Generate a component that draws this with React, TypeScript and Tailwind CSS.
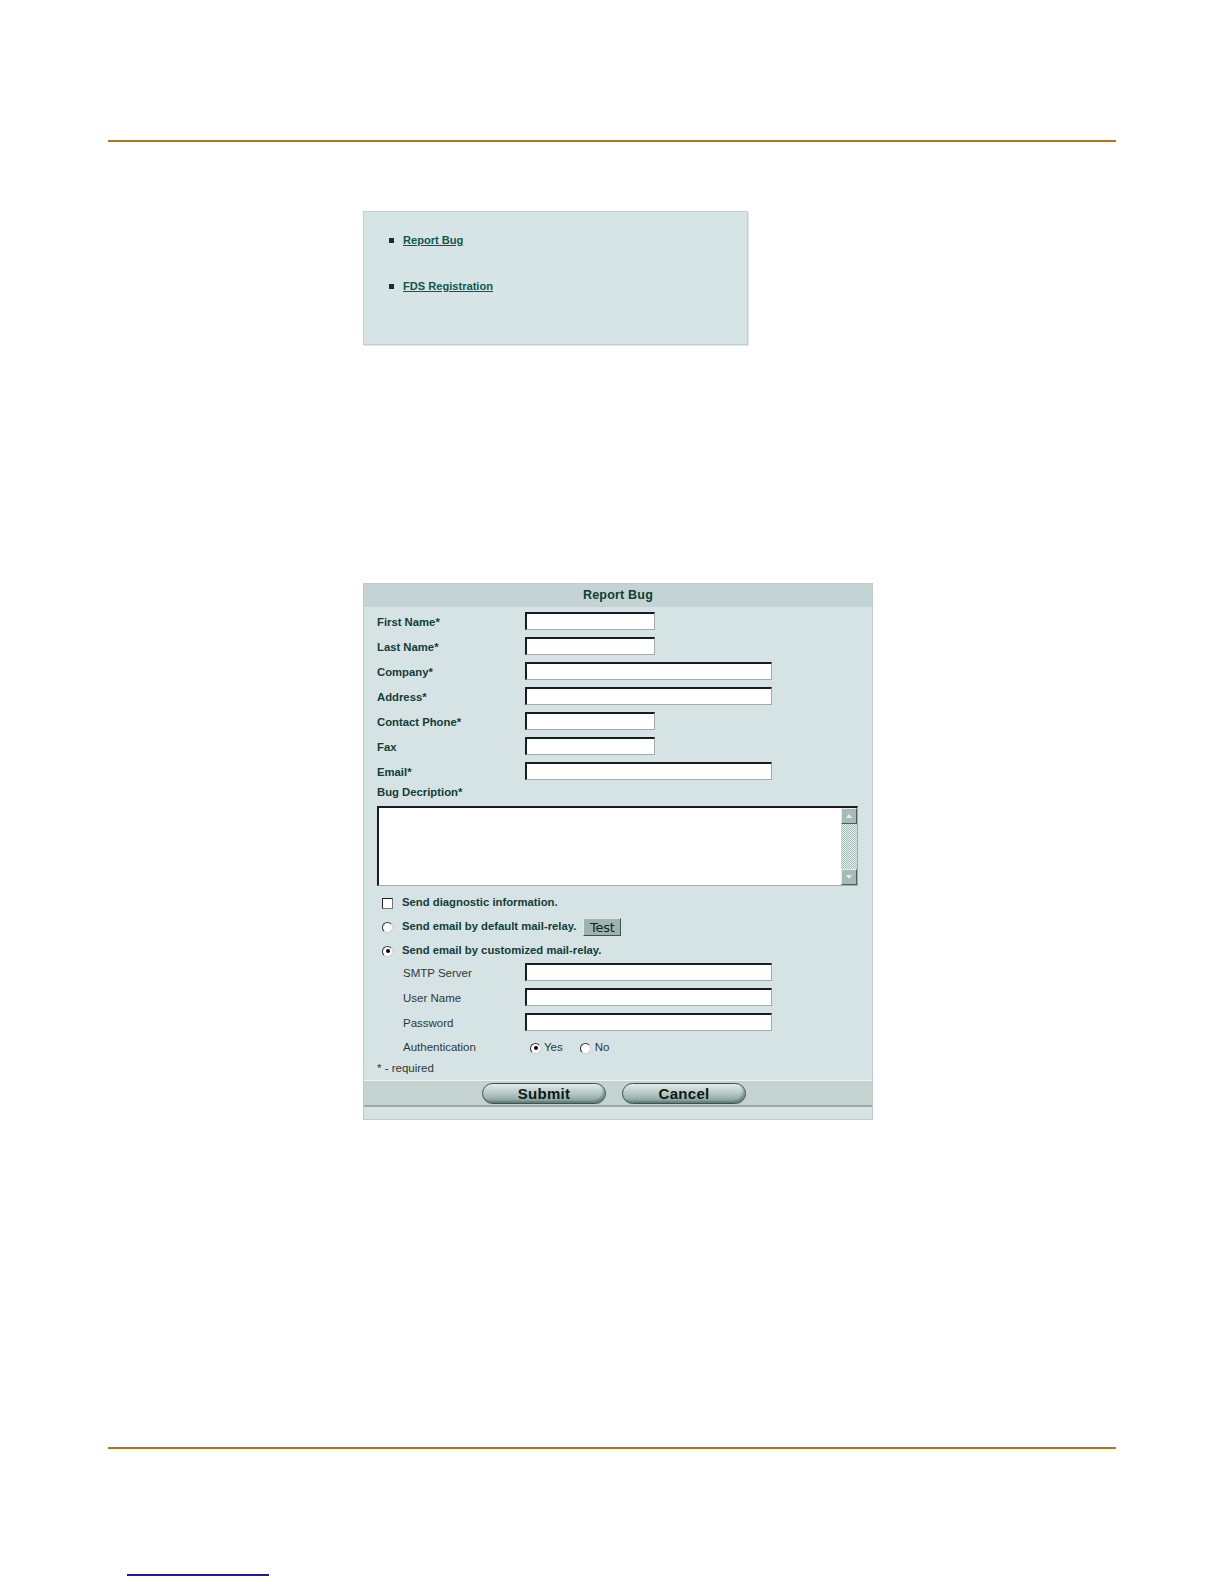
import React from 'react'

const boldLabel = "text-[11.3px] font-bold text-[#123d36] leading-none"
const plainLabel = "text-[11.5px] text-[#2c3937] leading-none"

function TextInput({ wide }: { wide?: boolean }) {
    return (
        <input
            type="text"
            className={wide
                ? "w-[247px] h-[18px] bg-white border-t-2 border-l-2 border-b border-r border-t-[#1c1c1c] border-l-[#1c1c1c] border-b-[#a2acaa] border-r-[#a2acaa] outline-none"
                : "w-[130px] h-[18px] bg-white border-t-2 border-l-2 border-b border-r border-t-[#1c1c1c] border-l-[#1c1c1c] border-b-[#a2acaa] border-r-[#a2acaa] outline-none"}
        />
    )
}

function Radio({ checked }: { checked?: boolean }) {
    return (
        <span className="w-[11px] h-[11px] shrink-0 rounded-full bg-white border border-t-[#333] border-l-[#333] border-b-[#c9d2d0] border-r-[#c9d2d0] flex items-center justify-center">
            {checked && <span className="w-[4px] h-[4px] rounded-full bg-black" />}
        </span>
    )
}

function Row({ label, wide, sub }: { label: string; wide?: boolean; sub?: boolean }) {
    return (
        <div className="flex items-center h-[25px]">
            <div className={sub ? "w-[148px] pl-[26px]" : "w-[148px]"}>
                <span className={sub ? plainLabel : boldLabel}>{label}</span>
            </div>
            <TextInput wide={wide} />
        </div>
    )
}

function Scrollbar() {
    return (
        <div className="w-[16px] h-full flex flex-col bg-[repeating-conic-gradient(#a9bcb9_0_25%,#e6eeed_0_50%)] bg-[length:2px_2px]">
            <div className="h-[16px] bg-[#a7bab7] border border-t-[#e4ecea] border-l-[#e4ecea] border-b-[#4e5f5c] border-r-[#4e5f5c] flex items-center justify-center">
                <span className="w-0 h-0 border-l-[3px] border-r-[3px] border-b-[4px] border-l-transparent border-r-transparent border-b-[#e8efee]" />
            </div>
            <div className="flex-1" />
            <div className="h-[16px] bg-[#a7bab7] border border-t-[#e4ecea] border-l-[#e4ecea] border-b-[#4e5f5c] border-r-[#4e5f5c] flex items-center justify-center">
                <span className="w-0 h-0 border-l-[3px] border-r-[3px] border-t-[4px] border-l-transparent border-r-transparent border-t-[#e8efee]" />
            </div>
        </div>
    )
}

function PillButton({ children }: { children: React.ReactNode }) {
    return (
        <button
            type="button"
            className="w-[124px] h-[21px] rounded-full border border-[#3c524d] bg-gradient-to-b from-[#e2ebe9] via-[#b5c8c4] to-[#7f9b95] shadow-[inset_-2px_-2px_2px_rgba(40,60,56,0.35)] text-[15px] font-bold text-[#0c1917] leading-none tracking-[0.3px]"
        >
            {children}
        </button>
    )
}

export default function App() {
    return (
        <div className="w-[1224px] h-[1584px] bg-white flex flex-col font-['Liberation_Sans',Arial,sans-serif]">
            <div className="mt-[140px] ml-[108px] w-[1008px] h-[2px] bg-[#b5731b]" />

            <div className="mt-[69px] ml-[363px] w-[385px] h-[134px] bg-[#d6e4e6] border border-[#c4cecf] shadow-[1px_1px_0_#e3e8e8] pl-[25px] pt-[22px] flex flex-col gap-[33px]">
                <div className="flex items-center h-[13px]">
                    <span className="w-[5px] h-[5px] bg-[#17302b]" />
                    <a href="#" className="ml-[9px] text-[11.1px] font-bold text-[#0d5a4d] underline leading-none">Report Bug</a>
                </div>
                <div className="flex items-center h-[13px]">
                    <span className="w-[5px] h-[5px] bg-[#17302b]" />
                    <a href="#" className="ml-[9px] text-[11.1px] font-bold text-[#0d5a4d] underline leading-none">FDS Registration</a>
                </div>
            </div>

            <div className="mt-[238px] ml-[363px] w-[510px] bg-[#d6e3e5] border border-[#bfcbca] flex flex-col">
                <div className="h-[23px] bg-[#c4d3d3] flex items-center justify-center">
                    <span className="text-[12.5px] font-bold text-[#0e3d35] tracking-[0.2px]">Report Bug</span>
                </div>

                <div className="pl-[13px] pt-[1px] pb-[3px] flex flex-col">
                    <Row label="First Name*" />
                    <Row label="Last Name*" />
                    <Row label="Company*" wide />
                    <Row label="Address*" wide />
                    <Row label="Contact Phone*" />
                    <Row label="Fax" />
                    <Row label="Email*" wide />

                    <div className="h-[20px] flex items-center">
                        <span className={boldLabel}>Bug Decription*</span>
                    </div>
                    <div className="mt-[3px] w-[481px] h-[80px] flex bg-white border-t-2 border-l-2 border-b border-r border-t-[#1c1c1c] border-l-[#1c1c1c] border-b-[#a2acaa] border-r-[#a2acaa]">
                        <textarea className="flex-1 resize-none outline-none bg-white" />
                        <Scrollbar />
                    </div>

                    <div className="mt-[5px] h-[24px] flex items-center">
                        <div className="w-[25px] pl-[5px]">
                            <span className="block w-[11px] h-[11px] bg-white border border-t-[#222] border-l-[#222] border-b-[#777] border-r-[#777]" />
                        </div>
                        <span className={boldLabel}>Send diagnostic information.</span>
                    </div>
                    <div className="h-[24px] flex items-center">
                        <div className="w-[25px] pl-[5px]">
                            <Radio />
                        </div>
                        <span className={boldLabel}>Send email by default mail-relay.</span>
                        <button
                            type="button"
                            className="ml-[7px] w-[38px] h-[18px] bg-[#9db4ae] border border-t-[#dfe8e6] border-l-[#dfe8e6] border-b-[#3f524e] border-r-[#3f524e] text-[13px] text-[#17231f] leading-none font-['DejaVu_Sans',sans-serif] tracking-[-0.2px]"
                        >
                            Test
                        </button>
                    </div>
                    <div className="h-[24px] flex items-center">
                        <div className="w-[25px] pl-[5px]">
                            <Radio checked />
                        </div>
                        <span className={boldLabel}>Send email by customized mail-relay.</span>
                    </div>

                    <div className="-mt-[4px] flex flex-col">
                        <Row label="SMTP Server" wide sub />
                        <Row label="User Name" wide sub />
                        <Row label="Password" wide sub />
                        <div className="flex items-center h-[24px]">
                            <div className="w-[148px] pl-[26px]">
                                <span className={plainLabel}>Authentication</span>
                            </div>
                            <div className="ml-[5px] flex items-center pt-[4px]">
                                <Radio checked />
                                <span className="ml-[3px] text-[11.5px] text-[#2c3937] leading-none">Yes</span>
                                <span className="ml-[17px]">
                                    <Radio />
                                </span>
                                <span className="ml-[4px] text-[11.5px] text-[#2c3937] leading-none">No</span>
                            </div>
                        </div>
                        <div className="mt-[3px] h-[16px] flex items-center">
                            <span className={plainLabel}>* - required</span>
                        </div>
                    </div>
                </div>

                <div className="h-[27px] bg-[#c4d2d0] border-t border-t-[#eef4f3] border-b-2 border-b-[#9aa9a6] flex items-center justify-center gap-[16px] pr-[8px]">
                    <PillButton>Submit</PillButton>
                    <PillButton>Cancel</PillButton>
                </div>
                <div className="h-[12px] bg-[#d6e3e2]" />
            </div>

            <div className="mt-[327px] ml-[108px] w-[1008px] h-[2px] bg-[#b5731b]" />

            <div className="mt-[125px] ml-[127px] w-[142px] h-[2px] bg-[#1b1b95]" />
        </div>
    )
}
